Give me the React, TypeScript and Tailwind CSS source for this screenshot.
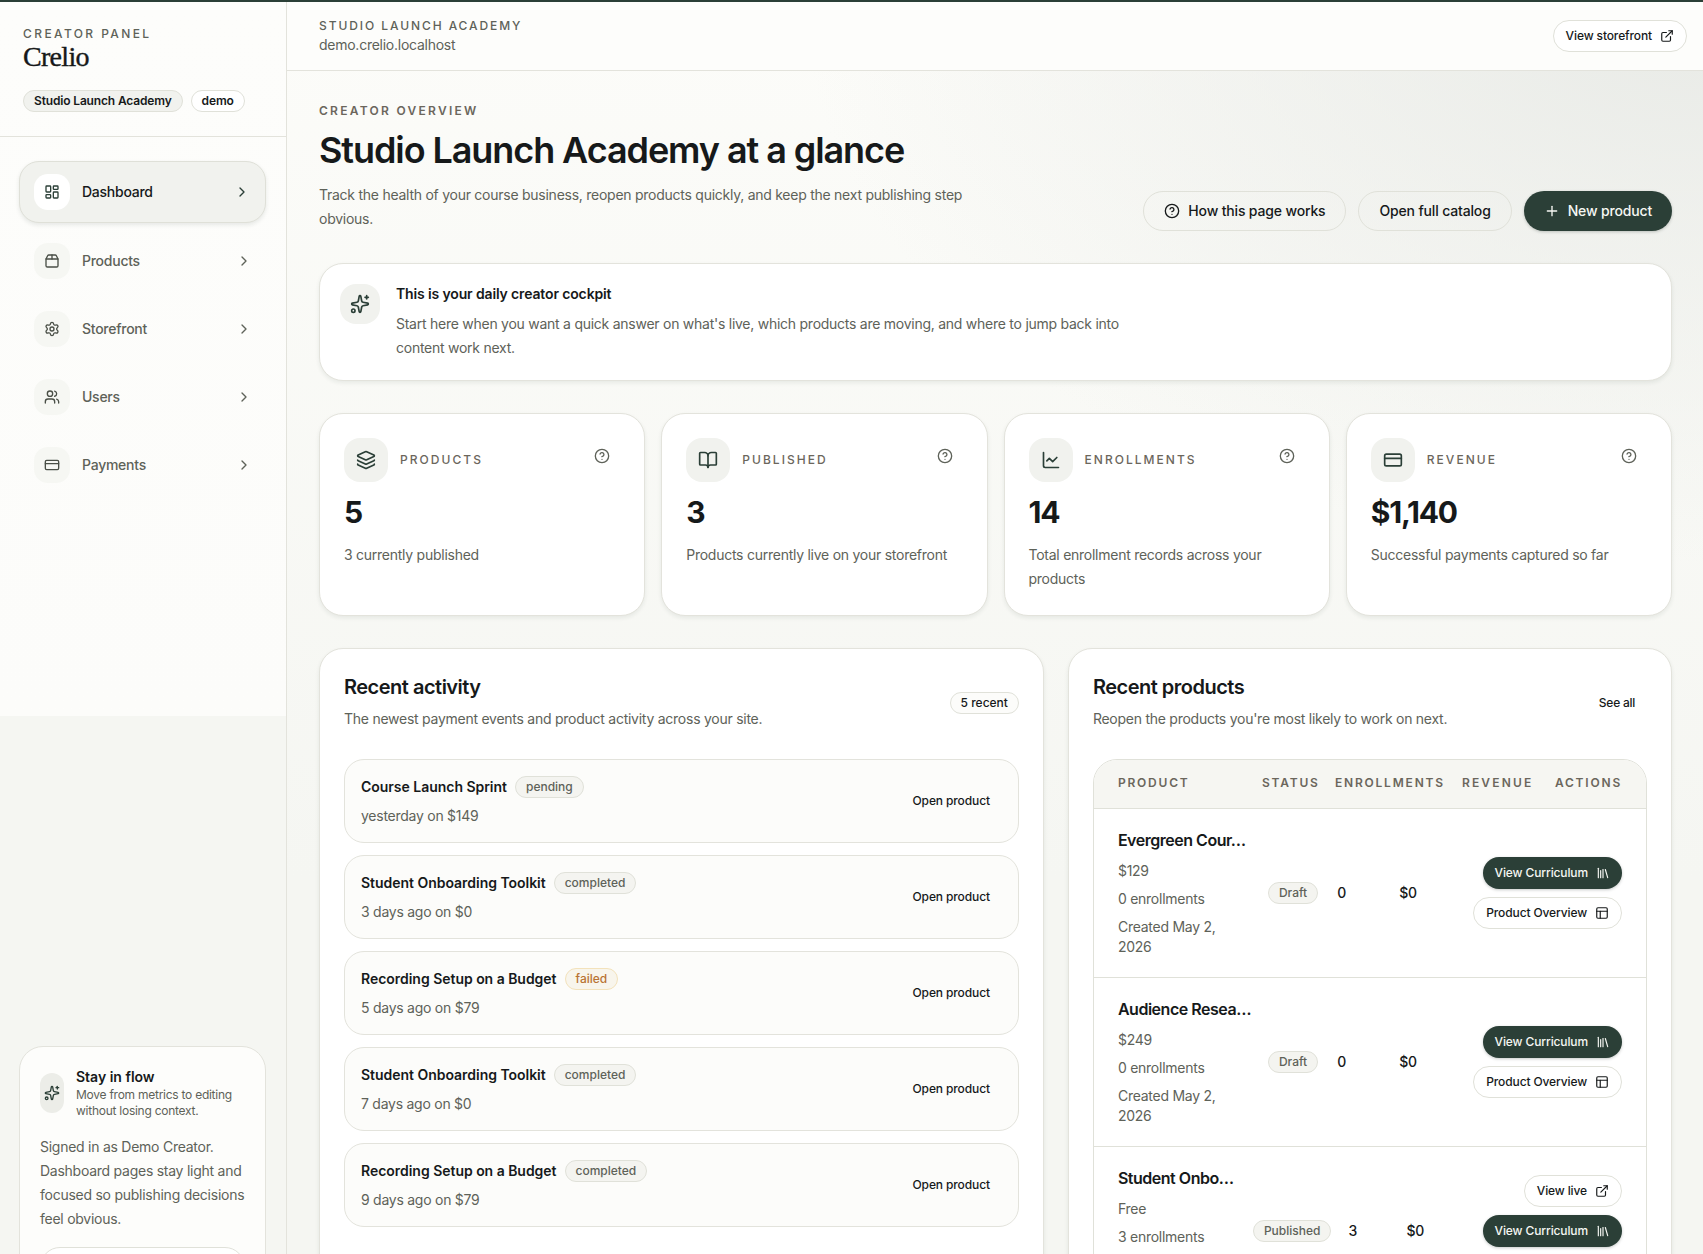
import { BookOpen, ChartLine, ChevronRight, CircleHelp, CreditCard, ExternalLink, Layers, LayoutDashboard, Library, Package2, PanelsTopLeft, Plus, Settings, Sparkles, Users } from 'lucide-react';
import type { ReactNode } from 'react';

const NAV_ITEMS = [
  { label: 'Products', icon: Package2 },
  { label: 'Storefront', icon: Settings },
  { label: 'Users', icon: Users },
  { label: 'Payments', icon: CreditCard },
];

const STATS = [
  { label: 'Products', value: '5', text: '3 currently published', icon: Layers },
  { label: 'Published', value: '3', text: 'Products currently live on your storefront', icon: BookOpen },
  { label: 'Enrollments', value: '14', text: 'Total enrollment records across your products', icon: ChartLine },
  { label: 'Revenue', value: '$1,140', text: 'Successful payments captured so far', icon: CreditCard },
];

const ACTIVITY = [
  { title: 'Course Launch Sprint', status: 'pending', meta: 'yesterday on $149' },
  { title: 'Student Onboarding Toolkit', status: 'completed', meta: '3 days ago on $0' },
  { title: 'Recording Setup on a Budget', status: 'failed', meta: '5 days ago on $79' },
  { title: 'Student Onboarding Toolkit', status: 'completed', meta: '7 days ago on $0' },
  { title: 'Recording Setup on a Budget', status: 'completed', meta: '9 days ago on $79' },
];

function Pill({ children, className = '' }: { children: ReactNode; className?: string }) {
  return (
    <span className={`inline-flex h-[22px] items-center rounded-full border border-[#e0e1d9] px-2.5 text-xs font-medium ${className}`}>
      {children}
    </span>
  );
}

function CurriculumButton() {
  return (
    <a className="flex h-8 items-center gap-2 rounded-full bg-[#2b3f37] px-3 text-xs font-medium tracking-[-0.01em] text-[#f6f7f3] shadow-[0_1px_3px_rgba(30,45,38,0.25)]">
      View Curriculum <Library className="h-3.5 w-3.5" />
    </a>
  );
}

function OutlineButton({ label, icon: Icon }: { label: string; icon: typeof Library }) {
  return (
    <a className="flex h-8 items-center gap-2 rounded-full border border-[#e0e1d9] bg-white px-3 text-xs font-medium tracking-[-0.01em] text-[#16191a]">
      {label} <Icon className="h-3.5 w-3.5" />
    </a>
  );
}

function ProductRow({ title, price, enrollments, status, count, children, published }: {
  title: string;
  price: string;
  enrollments: string;
  status: string;
  count: string;
  children: ReactNode;
  published?: boolean;
}) {
  return (
    <div className="flex items-center border-t border-[#e0e1d9] px-6 py-5">
      <div className={published ? 'w-[135px] shrink-0' : 'w-[150px] shrink-0'}>
        <div className="-mt-px text-base leading-6 font-semibold tracking-[-0.03em] whitespace-nowrap text-[#16191a]">{title}</div>
        <div className="mt-[9px] w-[120px] space-y-2 text-sm leading-5 text-[#5e6259]">
          <div>{price}</div>
          <div>{enrollments}</div>
          <div>Created May 2, 2026</div>
        </div>
      </div>
      <Pill className="bg-[#f4f4f0] tracking-normal text-[#5e6259]">{status}</Pill>
      <div className={published ? 'ml-[17px] w-[58px] text-sm font-medium text-[#16191a]' : 'ml-[19px] w-[62px] text-sm font-medium text-[#16191a]'}>{count}</div>
      <div className="text-sm font-medium text-[#16191a]">$0</div>
      <div className="ml-auto flex flex-col items-end gap-2">{children}</div>
    </div>
  );
}

export default function App() {
  return (
    <div className="flex h-screen flex-col overflow-hidden bg-[#fcfcf9] font-['Inter',sans-serif] tracking-[-0.016em] text-[#16191a]">
      <div className="h-0.5 shrink-0 bg-[#2b3f37]" />
      <div className="flex min-h-0 flex-1">
        <aside className="w-[287px] shrink-0 overflow-hidden border-r border-[#e3e3dc] bg-[linear-gradient(to_bottom,#fdfdfb_0,#fcfcfa_714px,#f5f6f2_714px)]">
          <div className="h-[135px] border-b border-[#e3e3dc] px-[23px] pt-6">
            <div className="text-xs leading-4 font-medium tracking-[0.2em] text-[#5e6259] uppercase">Creator Panel</div>
            <div className="mt-[-3px] font-['Liberation_Serif',serif] text-[28px] leading-9 tracking-tight text-[#16191a] [-webkit-text-stroke:0.4px_#16191a]">Crelio</div>
            <div className="mt-[15px] flex gap-2">
              <Pill className="bg-[#f1f2ee] font-semibold tracking-[-0.013em] text-[#16191a]">Studio Launch Academy</Pill>
              <Pill className="bg-white font-semibold tracking-[-0.013em] text-[#16191a]">demo</Pill>
            </div>
          </div>
          <div className="flex h-[909px] flex-col gap-2 pt-6 pr-5 pl-[19px]">
            <a className="flex items-center gap-3 rounded-[20px] border border-[#dfe0d8] bg-[#f1f2ee] px-[14px] py-3 shadow-[0_2px_4px_rgba(30,45,38,0.1)]">
              <span className="flex h-9 w-9 items-center justify-center rounded-[14px] bg-white text-[#2b3f37]"><LayoutDashboard className="h-4 w-4" /></span>
              <span className="flex-1 text-sm font-medium text-[#16191a]">Dashboard</span>
              <ChevronRight className="mr-px h-4 w-4 text-[#2b3f37]" />
            </a>
            {NAV_ITEMS.map((item) => (
              <a key={item.label} className="flex items-center gap-3 rounded-[20px] px-[15px] py-3">
                <span className="flex h-9 w-9 items-center justify-center rounded-[14px] bg-[#f6f7f3] text-[#4a4f47]"><item.icon className="h-4 w-4" /></span>
                <span className="flex-1 text-sm font-medium text-[#5e6259]">{item.label}</span>
                <ChevronRight className="-mr-px h-4 w-4 text-[#5e6259]" />
              </a>
            ))}
          </div>
          <div className="mr-5 ml-[19px] rounded-[24px] border border-[#e3e3dc] bg-[#fdfdfb] p-5">
            <div className="flex items-center gap-3">
              <span className="flex h-10 w-6 shrink-0 items-center justify-center rounded-xl bg-[#ecede8] text-[#2b3f37]"><Sparkles className="h-4 w-4" /></span>
              <div>
                <div className="text-sm leading-5 font-semibold tracking-normal text-[#16191a]">Stay in flow</div>
                <div className="text-xs leading-4 text-[#5e6259]">Move from metrics to editing without losing context.</div>
              </div>
            </div>
            <p className="mt-4 text-sm leading-6 text-[#5e6259]">Signed in as Demo Creator. Dashboard pages stay light and focused so publishing decisions feel obvious.</p>
            <div className="mt-4 h-10 rounded-full border border-[#e0e1d9] bg-white" />
          </div>
        </aside>

        <div className="min-w-0 flex-1 overflow-hidden bg-[radial-gradient(ellipse_900px_560px_at_100%_0%,#e8eae6,transparent),linear-gradient(to_bottom,#fcfcf9,#f5f6f2_70%)]">
          <header className="flex h-[69px] items-center justify-between border-b border-[#e3e3dc] bg-[#fdfdfb] pr-4 pl-8">
            <div className="pt-px">
              <div className="text-xs leading-4 font-medium tracking-[0.16em] text-[#5e6259] uppercase">Studio Launch Academy</div>
              <div className="mt-px text-sm leading-5 text-[#5e6259]">demo.crelio.localhost</div>
            </div>
            <a className="flex h-8 items-center gap-2 rounded-full border border-[#e0e1d9] bg-white px-3 text-xs font-medium tracking-[-0.01em] text-[#16191a]">
              View storefront <ExternalLink className="h-3.5 w-3.5" />
            </a>
          </header>

          <main className="pt-8 pr-[31px] pl-8">
            <div className="flex items-end justify-between">
              <div>
                <div className="text-xs leading-4 font-semibold tracking-[0.19em] text-[#6b665c] uppercase">Creator overview</div>
                <h1 className="mt-[11px] text-4xl leading-10 font-semibold tracking-[-0.03em] text-[#16191a]">Studio Launch Academy at a glance</h1>
                <p className="mt-[13px] w-[672px] text-sm leading-6 text-[#5e6259]">Track the health of your course business, reopen products quickly, and keep the next publishing step obvious.</p>
              </div>
              <div className="flex gap-3 tracking-[-0.01em]">
                <a className="flex h-10 items-center gap-2 rounded-full border border-[#e0e1d9] px-5 text-sm font-medium"><CircleHelp className="h-4 w-4" /> How this page works</a>
                <a className="flex h-10 items-center rounded-full border border-[#e0e1d9] px-5 text-sm font-medium">Open full catalog</a>
                <a className="flex h-10 items-center gap-2 rounded-full bg-[#2b3f37] px-5 text-sm font-medium text-[#f6f7f3] shadow-[0_1px_3px_rgba(30,45,38,0.25)]"><Plus className="h-4 w-4" /> New product</a>
              </div>
            </div>

            <section className="mt-8 flex gap-4 rounded-[24px] border border-[#e3e3dc] bg-white p-5 shadow-[0_2px_4px_rgba(30,45,38,0.08)]">
              <span className="flex h-10 w-10 shrink-0 items-center justify-center rounded-2xl bg-[#f1f2ee] text-[#2b3f37]"><Sparkles className="h-5 w-5" /></span>
              <div>
                <div className="text-sm leading-5 font-semibold tracking-[-0.01em] text-[#16191a]">This is your daily creator cockpit</div>
                <p className="mt-2 max-w-[740px] text-sm leading-6 text-[#5e6259]">Start here when you want a quick answer on what's live, which products are moving, and where to jump back into content work next.</p>
              </div>
            </section>

            <section className="mt-8 grid grid-cols-4 gap-4">
              {STATS.map((stat) => (
                <div key={stat.label} className="rounded-[24px] border border-[#e3e3dc] bg-white p-6 shadow-[0_2px_4px_rgba(30,45,38,0.08)]">
                  <div className="flex items-start justify-between">
                    <div className="flex items-center gap-3">
                      <span className="flex h-11 w-11 items-center justify-center rounded-2xl bg-[#f1f2ee] text-[#2b3f37]"><stat.icon className="h-5 w-5" /></span>
                      <span className="text-xs font-medium tracking-[0.17em] text-[#6b665c] uppercase">{stat.label}</span>
                    </div>
                    <span className="p-2.5 text-[#5e6259]"><CircleHelp className="h-4 w-4" /></span>
                  </div>
                  <div className="mt-3 text-3xl leading-9 font-bold tracking-[-0.04em] text-[#16191a]">{stat.value}</div>
                  <p className="mt-[13px] min-h-12 text-sm leading-6 text-[#5e6259]">{stat.text}</p>
                </div>
              ))}
            </section>

            <section className="mt-8 grid grid-cols-[minmax(0,1.2fr)_minmax(0,1fr)] gap-6">
              <div className="rounded-[24px] border border-[#e3e3dc] bg-white p-6 shadow-[0_2px_4px_rgba(30,45,38,0.08)]">
                <div className="flex items-center justify-between">
                  <div>
                    <h2 className="text-xl leading-7 font-semibold tracking-tight text-[#16191a]">Recent activity</h2>
                    <p className="mt-1.5 text-sm leading-6 text-[#5e6259]">The newest payment events and product activity across your site.</p>
                  </div>
                  <Pill className="mt-[2px] bg-[#fcfcfa] tracking-normal text-[#16191a]">5 recent</Pill>
                </div>
                <div className="mt-7 flex flex-col gap-3">
                  {ACTIVITY.map((row, index) => (
                    <div key={index} className="flex items-center justify-between rounded-[20px] border border-[#e3e3dc] bg-[#fcfcfa] p-4">
                      <div>
                        <div className="flex items-center gap-2">
                          <span className="text-sm font-semibold tracking-[-0.002em] text-[#16191a]">{row.title}</span>
                          {row.status === 'failed' ? (
                            <Pill className="border-[#f3e2bb] bg-[#f8f5ec] tracking-normal text-[#b97333]">{row.status}</Pill>
                          ) : (
                            <Pill className="bg-[#f4f4f0] tracking-normal text-[#5e6259]">{row.status}</Pill>
                          )}
                        </div>
                        <div className="mt-2 text-sm leading-5 text-[#5e6259]">{row.meta}</div>
                      </div>
                      <a className="px-3 text-xs font-medium tracking-[-0.01em] text-[#16191a]">Open product</a>
                    </div>
                  ))}
                </div>
              </div>

              <div className="rounded-[24px] border border-[#e3e3dc] bg-white p-6 shadow-[0_2px_4px_rgba(30,45,38,0.08)]">
                <div className="flex items-center justify-between">
                  <div>
                    <h2 className="text-xl leading-7 font-semibold tracking-tight text-[#16191a]">Recent products</h2>
                    <p className="mt-1.5 text-sm leading-6 text-[#5e6259]">Reopen the products you're most likely to work on next.</p>
                  </div>
                  <a className="mt-[2px] px-3 text-xs font-medium text-[#16191a]">See all</a>
                </div>
                <div className="mt-7 overflow-hidden rounded-[24px] border border-[#e0e1d9]">
                  <div className="flex h-12 items-center bg-[#f6f6f2] px-6 pb-0.5 text-xs font-semibold tracking-[0.15em] text-[#6b665c] uppercase">
                    <span className="w-[144px]">Product</span>
                    <span className="w-[73px]">Status</span>
                    <span className="w-[127px]">Enrollments</span>
                    <span className="w-[93px] tracking-[0.18em]">Revenue</span>
                    <span>Actions</span>
                  </div>
                  <ProductRow title="Evergreen Cour…" price="$129" enrollments="0 enrollments" status="Draft" count="0">
                    <CurriculumButton />
                    <OutlineButton label="Product Overview" icon={PanelsTopLeft} />
                  </ProductRow>
                  <ProductRow title="Audience Resea…" price="$249" enrollments="0 enrollments" status="Draft" count="0">
                    <CurriculumButton />
                    <OutlineButton label="Product Overview" icon={PanelsTopLeft} />
                  </ProductRow>
                  <ProductRow title="Student Onbo…" price="Free" enrollments="3 enrollments" status="Published" count="3" published>
                    <OutlineButton label="View live" icon={ExternalLink} />
                    <CurriculumButton />
                    <OutlineButton label="Product Overview" icon={PanelsTopLeft} />
                  </ProductRow>
                </div>
              </div>
            </section>
          </main>
        </div>
      </div>
    </div>
  );
}
